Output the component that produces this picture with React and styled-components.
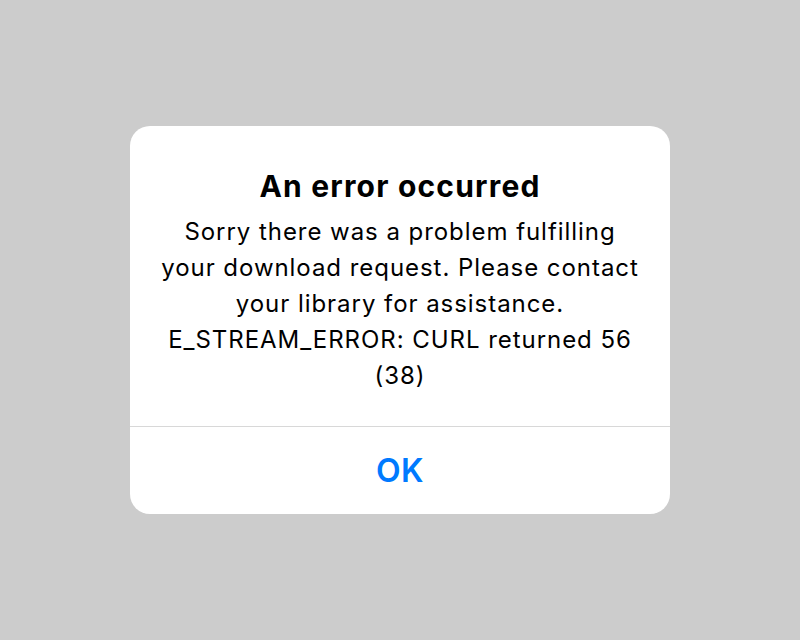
import React from 'react';
import styled, { createGlobalStyle } from 'styled-components';

const GlobalStyle = createGlobalStyle`
  html, body {
    margin: 0;
    padding: 0;
    background: #cccccc;
  }
  body {
    font-family: Inter, "Noto Sans", "Liberation Sans", sans-serif;
    -webkit-font-smoothing: antialiased;
  }
`;

const Screen = styled.div`
  width: 800px;
  height: 640px;
  display: flex;
  align-items: center;
  justify-content: center;
`;

const Alert = styled.div`
  width: 540px;
  background: #ffffff;
  border-radius: 20px;
  overflow: hidden;
  display: flex;
  flex-direction: column;
`;

const Content = styled.div`
  padding: 42px 28px 32px;
  text-align: center;
  color: #000;
`;

const Title = styled.h1`
  margin: 0 0 10px;
  font-size: 30px;
  line-height: 36px;
  font-weight: 650;
  letter-spacing: 1.2px;
`;

const Message = styled.p`
  margin: 0;
  font-size: 24px;
  line-height: 36px;
  font-weight: 400;
  letter-spacing: 0.95px;
`;

const Actions = styled.div`
  border-top: 1px solid #d8d8d8;
  display: flex;
`;

const ActionButton = styled.button`
  flex: 1;
  height: 87px;
  padding: 0;
  border: none;
  background: transparent;
  color: #007aff;
  font-family: inherit;
  font-size: 32px;
  letter-spacing: 0.5px;
  font-weight: ${p => (p.primary ? 600 : 400)};
  cursor: pointer;
`;

export default function App() {
  return (
    <>
      <GlobalStyle />
      <Screen>
        <Alert role="alertdialog">
          <Content>
            <Title>An error occurred</Title>
            <Message>
              Sorry there was a problem fulfilling your download request.
              Please contact your library for assistance.
              <br />
              E_STREAM_ERROR: CURL returned 56 (38)
            </Message>
          </Content>
          <Actions>
            <ActionButton primary>OK</ActionButton>
          </Actions>
        </Alert>
      </Screen>
    </>
  );
}
